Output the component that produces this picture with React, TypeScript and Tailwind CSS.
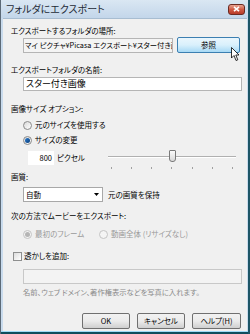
import React from "react";

const jp = "font-['Noto_Sans_CJK_JP','Noto_Sans',sans-serif] [font-feature-settings:'palt']";

function Radio({ checked, disabled }: { checked?: boolean; disabled?: boolean }) {
  return (
    <span
      className={`relative inline-flex w-[9px] h-[9px] rounded-full border items-center justify-center shrink-0 ${
        disabled ? "border-[#c4c4c4] bg-[#f4f4f4]" : "border-[#8a8a8a] bg-gradient-to-br from-[#d9d9d9] to-[#ffffff]"
      }`}
    >
      {checked && (
        <span
          className={`w-[5px] h-[5px] rounded-full ${
            disabled ? "bg-[#b5b5b5]" : "bg-gradient-to-br from-[#2a7bd0] to-[#0b3f7a]"
          }`}
        />
      )}
    </span>
  );
}

function Btn({ children, hover, w }: { children: React.ReactNode; hover?: boolean; w: string }) {
  return (
    <div
      className={`${w} h-[16px] rounded-[2px] border flex items-center justify-center text-[7.5px] leading-none whitespace-nowrap ${
        hover
          ? "border-[#3c7fb1] bg-gradient-to-b from-[#eaf6fd] via-[#d9f0fc] to-[#a7d9f5]"
          : "border-[#707070] bg-gradient-to-b from-[#f2f2f2] via-[#ebebeb] to-[#cfcfcf]"
      }`}
    >
      {children}
    </div>
  );
}

export default function App() {
  const ticks = [0, 1, 2, 3, 4, 5, 6];
  return (
    <div className={`w-[250px] h-[334px] overflow-hidden relative flex flex-col bg-[#c9dbed] border-l border-l-[#5c6a77] ${jp} text-black`}>
      {/* title bar */}
      <div className="h-[18px] shrink-0 flex items-center justify-between bg-gradient-to-b from-[#dae7f3] to-[#c3d6ea] pl-[5px] pr-[5px]">
        <span className="text-[10px] leading-none text-[#1e2a36] whitespace-nowrap">フォルダにエクスポート</span>
        <div className="w-[17px] h-[11px] rounded-[3px] border border-[#6b2a22] bg-gradient-to-b from-[#e8a493] via-[#cf5a45] to-[#b83a28] flex items-center justify-center">
          <svg width="7" height="6" viewBox="0 0 7 6">
            <path d="M1 0.8 L6 5.2 M6 0.8 L1 5.2" stroke="#ffffff" strokeWidth="1.6" />
          </svg>
        </div>
      </div>
      {/* body */}
      <div className="flex-1 flex flex-col mx-[2px] mr-[3px] bg-[#f0f0f0] border-t border-[#a8bdd1] pl-[8px] pr-[6px] text-[7.5px] leading-[12px]">
        <div className="mt-[6px] whitespace-nowrap">エクスポートするフォルダの場所:</div>
        <div className="flex items-center h-[16px] ml-[12px]">
          <div className="w-[150px] h-[15px] border border-[#b5b5b5] bg-[#f4f4f4] overflow-hidden whitespace-nowrap pl-[1px] leading-[13px] text-[7.3px]">
            マイ ピクチャ¥Picasa エクスポート¥スター付き画像
          </div>
          <div className="ml-[4px]">
            <Btn hover w="w-[63px]">参照</Btn>
          </div>
        </div>
        <div className="mt-[11px] whitespace-nowrap">エクスポートフォルダの名前:</div>
        <div className="ml-[12px] mt-[1px] w-[219px] h-[14px] border border-[#b5b5b5] bg-white pl-[2px] text-[9px] leading-[12px] whitespace-nowrap">
          スター付き画像
        </div>
        <div className="mt-[12px] whitespace-nowrap">画像サイズ オプション:</div>
        <div className="ml-[12px] mt-[4px] flex items-center gap-[3px] h-[12px]">
          <Radio />
          <span className="whitespace-nowrap">元のサイズを使用する</span>
        </div>
        <div className="ml-[12px] mt-[3px] flex items-center gap-[3px] h-[12px]">
          <Radio checked />
          <span className="whitespace-nowrap">サイズの変更</span>
        </div>
        <div className="ml-[17px] mt-[5px] flex items-start h-[20px]">
          <div className="w-[26px] h-[14px] bg-white text-right pr-[2px] leading-[14px] shrink-0">800</div>
          <span className="ml-[3px] leading-[14px] whitespace-nowrap w-[48px] shrink-0">ピクセル</span>
          <div className="ml-[3px] flex flex-col w-[128px] shrink-0">
            <div className="relative h-[11px] flex items-center">
              <div className="w-full h-[2px] border-t border-[#b0b0b0] border-b border-b-[#ffffff]" />
              <div className="absolute left-[61px] top-[-1px] w-[7px] h-[12px] rounded-b-[3px] rounded-t-[1px] border border-[#7a7a7a] bg-gradient-to-b from-[#fbfbfb] to-[#d8d8d8]" />
            </div>
            <div className="flex justify-between px-[3px] mt-[5px]">
              {ticks.map((t) => (
                <span key={t} className="w-[1px] h-[2px] bg-[#a0a0a0]" />
              ))}
            </div>
          </div>
        </div>
        <div className="whitespace-nowrap">画質:</div>
        <div className="ml-[12px] mt-[4px] flex items-center h-[15px]">
          <div className="w-[80px] h-[15px] bg-white border border-[#a8a8a8] flex items-center justify-between pl-[2px] pr-[3px]">
            <span>自動</span>
            <svg width="5" height="3" viewBox="0 0 5 3">
              <path d="M0 0 L5 0 L2.5 3 Z" fill="#000" />
            </svg>
          </div>
          <span className="ml-[5px] whitespace-nowrap">元の画質を保持</span>
        </div>
        <div className="mt-[8px] whitespace-nowrap">次の方法でムービーをエクスポート:</div>
        <div className="ml-[12px] mt-[6px] flex items-center h-[12px] text-[#9a9a9a]">
          <div className="flex items-center gap-[3px] w-[76px]">
            <Radio checked disabled />
            <span className="whitespace-nowrap">最初のフレーム</span>
          </div>
          <div className="flex items-center gap-[3px]">
            <Radio disabled />
            <span className="whitespace-nowrap">動画全体 (リサイズなし)</span>
          </div>
        </div>
        <div className="ml-[2px] mt-[10px] flex items-center gap-[2px] h-[12px]">
          <span className="w-[9px] h-[9px] border border-[#8e8f8f] bg-gradient-to-br from-[#dcdcdc] to-[#ffffff]" />
          <span className="whitespace-nowrap">透かしを追加:</span>
        </div>
        <div className="ml-[12px] mt-[7px] w-[219px] h-[15px] border border-[#c8c8c8] bg-[#f3f3f3]" />
        <div className="ml-[12px] mt-[2px] text-[#8a8a8a] whitespace-nowrap text-[7.3px]">名前、ウェブ ドメイン、著作権表示などを写真に入れます。</div>
        <div className="mt-[15px] flex justify-end gap-[7px] pr-[0px]">
          <Btn w="w-[48px]">OK</Btn>
          <Btn w="w-[48px]">キャンセル</Btn>
          <Btn w="w-[49px]">ヘルプ(H)</Btn>
        </div>
      </div>
      {/* bottom frame */}
      <div className="h-[3px] shrink-0 border-t border-[#9ed9f4] bg-[#0f4d5c]" />
      <div className="absolute right-0 top-0 bottom-0 w-[2px] bg-[#1d5566]" />
      {/* cursor */}
      <svg className="absolute left-[230px] top-[47px]" width="9" height="15" viewBox="0 0 9 15">
        <path d="M0.5 0.5 L0.5 11 L3 8.5 L5 13.5 L6.8 12.8 L4.8 8 L8 8 Z" fill="#ffffff" stroke="#000" strokeWidth="0.8" />
      </svg>
    </div>
  );
}
